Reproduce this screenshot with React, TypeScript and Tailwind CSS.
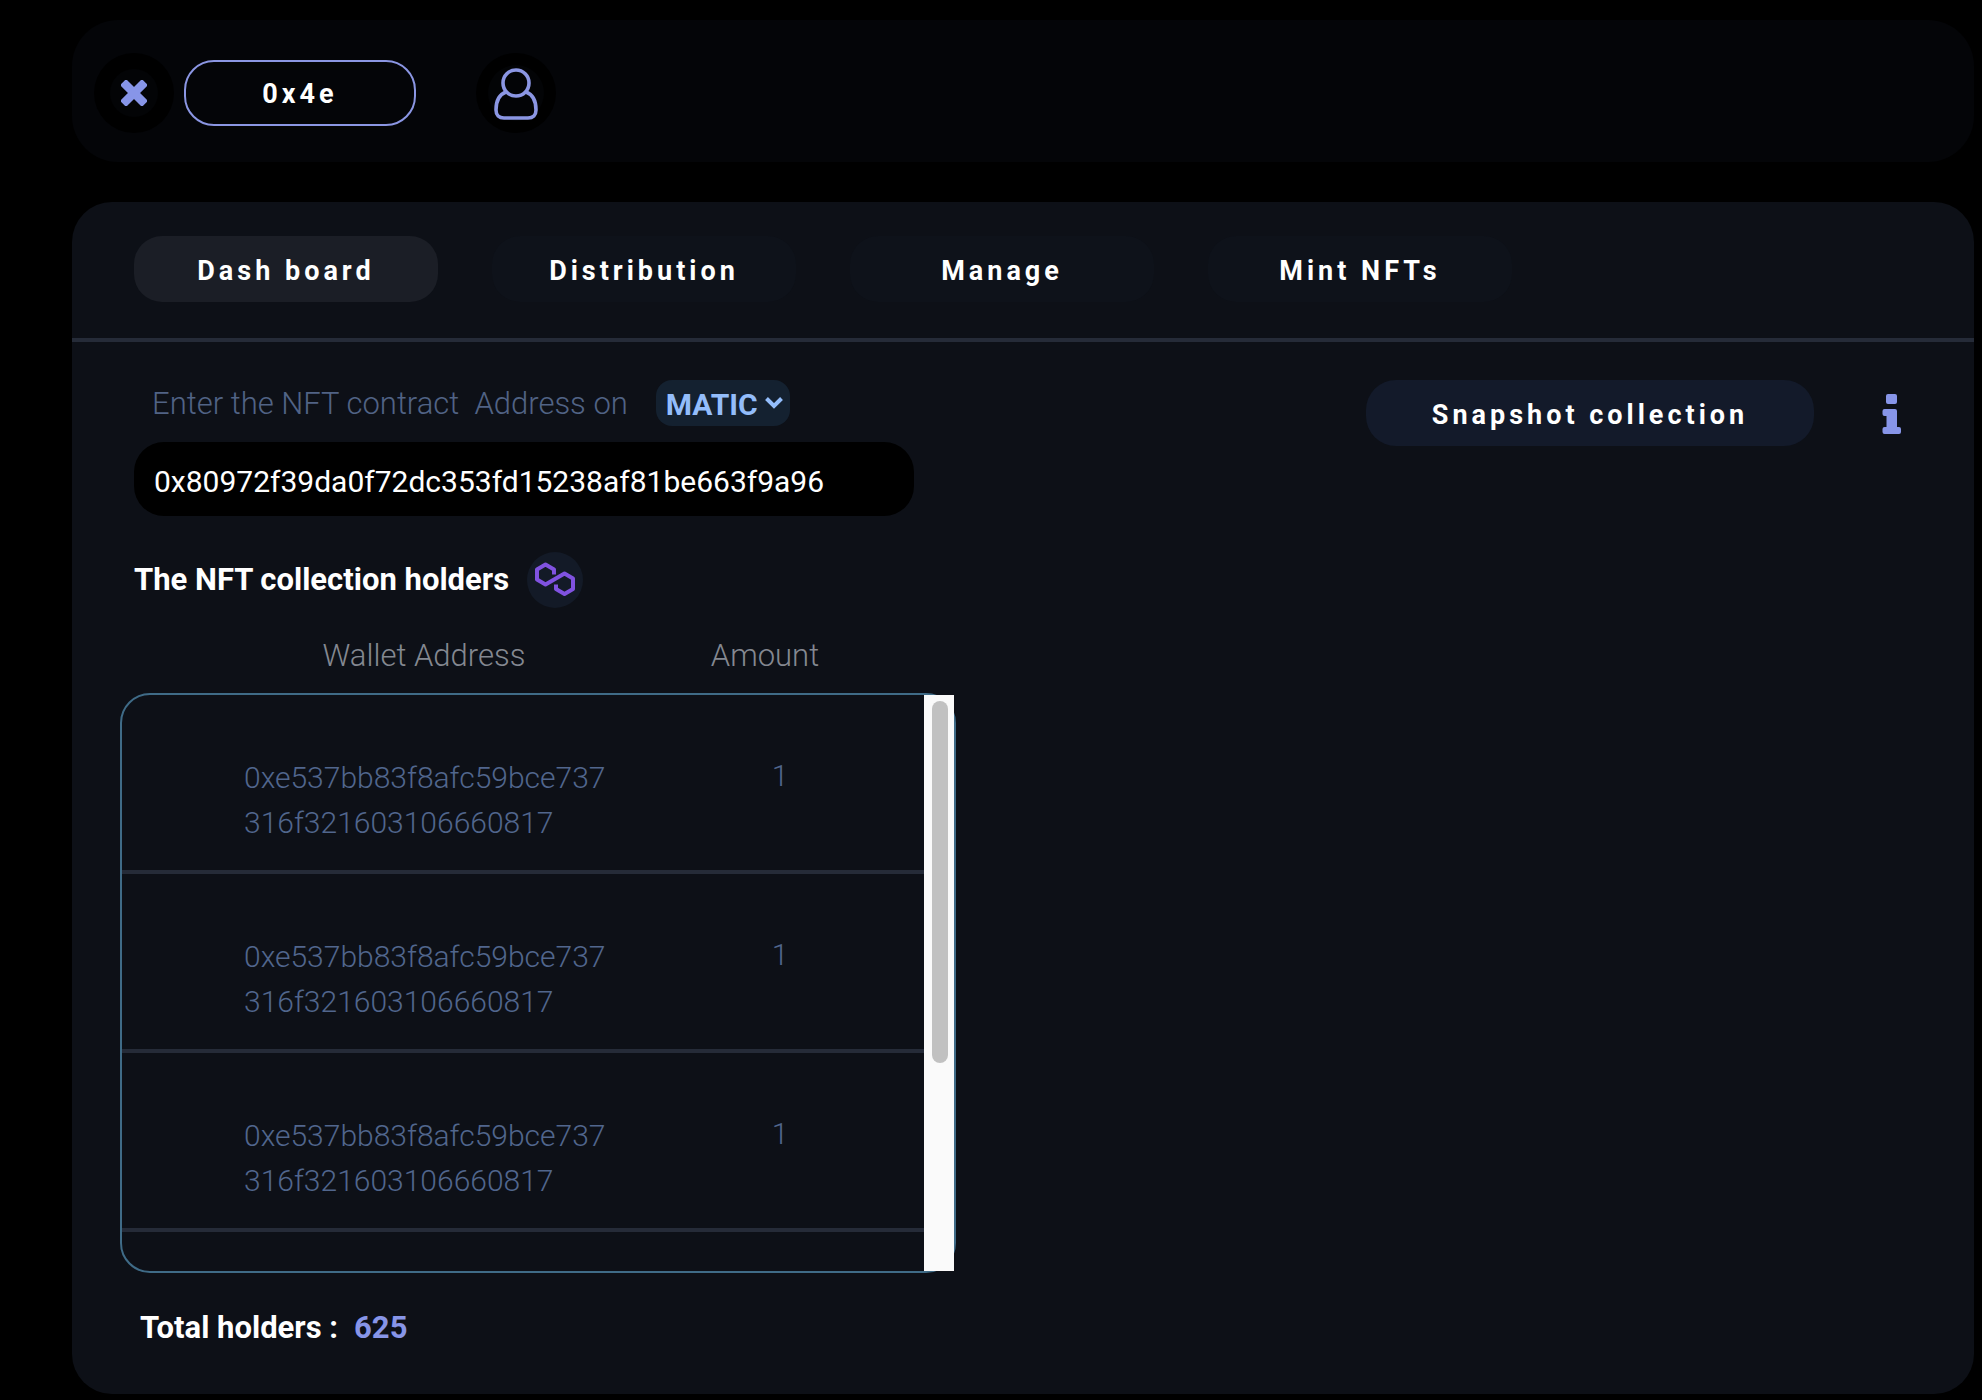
import React, { useState } from 'react';

const TABS = ['Dash board', 'Distribution', 'Manage', 'Mint NFTs'];
const CHAINS = ['MATIC', 'ETH', 'BNB'];

const holders = [
  { id: 1, wallet: '0xe537bb83f8afc59bce737316f321603106660817', amount: 1 },
  { id: 2, wallet: '0xe537bb83f8afc59bce737316f321603106660817', amount: 1 },
  { id: 3, wallet: '0xe537bb83f8afc59bce737316f321603106660817', amount: 1 },
];

function CloseIcon() {
  return (
    <svg viewBox="0 0 26 26" className="size-[26px]" fill="#8795e8">
      <rect x="-2.500" y="8.700" width="31" height="8.600" rx="2" transform="rotate(45 13 13)" />
      <rect x="-2.500" y="8.700" width="31" height="8.600" rx="2" transform="rotate(-45 13 13)" />
    </svg>
  );
}

function UserIcon() {
  return (
    <svg viewBox="0 0 44 52" className="h-[52px] w-11" fill="none" stroke="#8b96e3" strokeWidth="3.6">
      <circle cx="22" cy="15" r="13" />
      <path d="M12 24C5 26.500 2 33 2 42C2 47 5 50 10 50H34C39 50 42 47 42 42C42 33 39 26.500 32 24" />
    </svg>
  );
}

function InfoIcon() {
  return (
    <svg viewBox="0 0 20 40" className="h-10 w-5" fill="#8795e8">
      <rect x="4" y="0" width="11" height="10" rx="2" />
      <path d="M2.500 15H13Q15 15 15 17V33H17Q19 33 19 35V38Q19 40 17 40H2.500Q.5 40 .5 38V35Q.5 33 2.500 33H4.500V22H2.500Q.5 22 .5 20V17Q.5 15 2.500 15Z" />
    </svg>
  );
}

function PolygonIcon() {
  return (
    <svg viewBox="0 0 42 38" className="h-[38px] w-[42px]" fill="none" stroke="#8052e0" strokeWidth="4" strokeLinejoin="round">
      <path d="M20 13.500V8.500L11.500 3.500 3 8.500V18.500L11.500 23.500 30.500 12.500 39 17.500V28L30.500 33 22 28V23.500" />
    </svg>
  );
}

function HoldersTable() {
  return (
    <div className="relative -ml-3.5 w-[836px] max-w-full">
      <table className="block">
        <thead className="block">
          <tr className="flex h-[77px] items-center pt-1 text-[#848891]">
            <th className="w-[430px] pl-[178px] text-center font-light">Wallet Address</th>
            <th className="flex-1 pl-6 text-center font-light">Amount</th>
          </tr>
        </thead>
        <tbody className="block h-[580px] overflow-hidden rounded-[30px] border-2 border-[#3f6b87] text-[30px] text-[#51668d]">
          {holders.map((holder) => (
            <tr key={holder.id} className="flex h-[179px] border-b-4 border-[#252b38] pt-[60px]">
              <td className="ml-[122px] w-[372px] leading-[45px] break-all">{holder.wallet}</td>
              <td className="w-[328px] text-center leading-[42px]">{holder.amount}</td>
            </tr>
          ))}
        </tbody>
      </table>
      <div className="absolute right-0.5 bottom-0.5 h-[576px] w-[30px] bg-[#fafafa] py-1.5 pr-1.5 pl-2" aria-hidden="true">
        <div className="h-[362px] rounded-full bg-[#c1c1c1]" />
      </div>
    </div>
  );
}

export default function App() {
  const [tab, setTab] = useState('Dash board');
  const [chain, setChain] = useState('MATIC');
  const [address, setAddress] = useState('0x80972f39da0f72dc353fd15238af81be663f9a96');

  return (
    <div className="min-h-screen bg-black pt-5 pr-2 pb-1.5 pl-[72px] font-['Roboto',sans-serif] text-[31px] font-light text-white">
      <header className="flex h-[142px] items-center rounded-[46px] bg-[#040508] pt-1 pl-[22px]">
        <button aria-label="Close" className="flex size-20 items-center justify-center rounded-full bg-black">
          <span className="flex size-12 items-center justify-center rounded-full bg-[#030406]">
            <CloseIcon />
          </span>
        </button>
        <button className="ml-2.5 h-[66px] w-[232px] rounded-[30px] border-2 border-[#8b96e3] pt-0.5 text-[27px] font-bold tracking-[4px]">
          0x4e
        </button>
        <button aria-label="Profile" className="ml-[60px] flex size-20 items-center justify-center rounded-full bg-black">
          <span className="flex size-14 items-center justify-center rounded-full bg-[#030406] pt-0.5">
            <UserIcon />
          </span>
        </button>
      </header>

      <main className="mt-10 min-h-[1192px] rounded-[40px] bg-[#0d1017]">
        <nav className="flex h-[140px] items-center gap-[54px] border-b-4 border-[#252b38] pb-0.5 pl-[62px]">
          {TABS.map((name) => (
            <button
              key={name}
              onClick={() => setTab(name)}
              className={`h-[66px] w-[304px] rounded-[28px] pt-1 text-[27px] font-bold tracking-[4px] ${
                tab === name ? 'bg-[#1b1e26]' : 'bg-[#0e121a]'
              }`}
            >
              {name}
            </button>
          ))}
        </nav>

        <div className="flex items-start justify-between pt-[38px] pr-[72px] pl-[62px]">
          <section className="w-[836px]">
            <div className="flex h-[46px] items-center pl-[18px]">
              <label htmlFor="contract" className="pt-0.5 whitespace-pre text-[#516385]">
                Enter the NFT contract  Address on
              </label>
              <div className="relative ml-7">
                <select
                  aria-label="Chain"
                  value={chain}
                  onChange={(e) => setChain(e.target.value)}
                  className="block h-[46px] w-[134px] appearance-none rounded-2xl bg-[#142130] pt-0.5 pl-2.5 text-[30px] font-bold text-[#93bdfb]"
                >
                  {CHAINS.map((name) => (
                    <option key={name}>{name}</option>
                  ))}
                </select>
                <svg viewBox="0 0 18 12" className="pointer-events-none absolute top-[17px] right-[7px] h-3 w-[18px]" fill="none" stroke="#93bdfb" strokeWidth="4">
                  <path d="M1.500 1.500 9 9 16.500 1.500" />
                </svg>
              </div>
            </div>
            <input
              id="contract"
              value={address}
              onChange={(e) => setAddress(e.target.value)}
              className="mt-4 block h-[74px] w-[780px] rounded-[30px] bg-black px-5 pt-1 text-[30px] font-normal"
            />
            <div className="mt-9 flex h-14 items-center gap-[18px]">
              <h2 className="font-bold">The NFT collection holders</h2>
              <span className="flex size-14 items-center justify-center rounded-full bg-[#131a27]">
                <PolygonIcon />
              </span>
            </div>
            <div className="mt-2">
              <HoldersTable />
            </div>
            <p className="mt-8 pl-1.5 font-bold">
              Total holders :<span className="ml-4 text-[#8795e8]">625</span>
            </p>
          </section>

          <div className="flex items-center gap-[68px]">
            <button className="h-[66px] w-[448px] rounded-[30px] bg-[#131a2a] pt-1 text-[27px] font-bold tracking-[4px]">
              Snapshot collection
            </button>
            <button aria-label="Info" className="pt-0.5">
              <InfoIcon />
            </button>
          </div>
        </div>
      </main>
    </div>
  );
}
